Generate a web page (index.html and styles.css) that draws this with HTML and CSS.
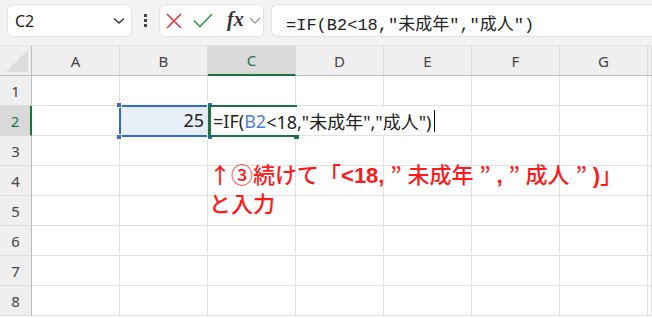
FILE: index.html
```html
<!DOCTYPE html>
<html>
<head>
    <meta charset="utf-8">
    <title>IF formula</title>
    <link rel="stylesheet" href="styles.css">
</head>
<body>
    <div class="toolbar">
        <div class="namebox">
            <span>C2</span>
            <svg width="12" height="8" viewBox="0 0 12 8"><path d="M1 1.5 L6 6 L11 1.5" fill="none" stroke="#333" stroke-width="1.4"/></svg>
        </div>
        <div class="dots"><i></i><i></i><i></i></div>
        <div class="fxbox">
            <svg class="cancel" width="16" height="16" viewBox="0 0 16 16"><path d="M1 1 L15 15 M15 1 L1 15" stroke="#e2333a" stroke-width="1.5"/></svg>
            <svg class="ok" width="20" height="15" viewBox="0 0 20 15"><path d="M1 7.5 L7 13.5 L19 1" fill="none" stroke="#2ea043" stroke-width="1.6"/></svg>
            <span class="fx">fx</span>
            <svg width="12" height="7" viewBox="0 0 12 7"><path d="M1 1 L6 6 L11 1" fill="none" stroke="#999" stroke-width="1.3"/></svg>
        </div>
        <div class="formula">=IF(B2&lt;18,"未成年","成人")</div>
    </div>

    <div class="sheet">
        <div class="corner"><span class="tri"></span></div>
        <div class="colh">A</div>
        <div class="colh">B</div>
        <div class="colh active">C</div>
        <div class="colh">D</div>
        <div class="colh">E</div>
        <div class="colh">F</div>
        <div class="colh">G</div>
        <div class="colh"></div>

        <div class="rowh">1</div>
        <div class="cell"></div><div class="cell"></div><div class="cell"></div><div class="cell"></div><div class="cell"></div><div class="cell"></div><div class="cell"></div><div class="cell"></div>
        <div class="rowh active">2</div>
        <div class="cell"></div><div class="cell num">25</div><div class="cell"></div><div class="cell"></div><div class="cell"></div><div class="cell"></div><div class="cell"></div><div class="cell"></div>
        <div class="rowh">3</div>
        <div class="cell"></div><div class="cell"></div><div class="cell"></div><div class="cell"></div><div class="cell"></div><div class="cell"></div><div class="cell"></div><div class="cell"></div>
        <div class="rowh">4</div>
        <div class="cell"></div><div class="cell"></div><div class="cell"></div><div class="cell"></div><div class="cell"></div><div class="cell"></div><div class="cell"></div><div class="cell"></div>
        <div class="rowh">5</div>
        <div class="cell"></div><div class="cell"></div><div class="cell"></div><div class="cell"></div><div class="cell"></div><div class="cell"></div><div class="cell"></div><div class="cell"></div>
        <div class="rowh">6</div>
        <div class="cell"></div><div class="cell"></div><div class="cell"></div><div class="cell"></div><div class="cell"></div><div class="cell"></div><div class="cell"></div><div class="cell"></div>
        <div class="rowh">7</div>
        <div class="cell"></div><div class="cell"></div><div class="cell"></div><div class="cell"></div><div class="cell"></div><div class="cell"></div><div class="cell"></div><div class="cell"></div>
        <div class="rowh">8</div>
        <div class="cell"></div><div class="cell"></div><div class="cell"></div><div class="cell"></div><div class="cell"></div><div class="cell"></div><div class="cell"></div><div class="cell"></div>

        <!-- selection on B2 -->
        <div class="sel">
            <i class="h tl"></i><i class="h tr"></i><i class="h bl"></i><i class="h br"></i>
        </div>
        <!-- editing C2 -->
        <div class="edit"><i class="fill"></i></div>
        <div class="edittext">=IF(<span class="ref">B2</span>&lt;18,"未成年","成人")<span class="caret"></span></div>

        <div class="note"><span class="j">↑</span>③続けて「<b>&lt;18,</b><span class="q">”</span>未成年<span class="q">”</span><b>,</b><span class="q">”</span>成人<span class="q">”</span><b>)</b>」<br>と入力</div>
    </div>
</body>
</html>
```

FILE: styles.css
```css
*
{
    box-sizing: border-box;
}

body
{
    margin: 0;
    width: 652px;
    height: 318px;
    overflow: hidden;
    background: #ffffff;
    font-family: "Noto Sans", "Noto Sans CJK JP", sans-serif;
    color: #222;
}

.toolbar
{
    height: 46px;
    background: #f3f3f3;
    display: flex;
    align-items: flex-start;
    padding: 4px 0 0 7px;
    border-bottom: 1px solid #e6e6e6;
}

.namebox
{
    width: 125px;
    height: 33px;
    background: #fff;
    border: 1px solid #e3e3e3;
    border-radius: 6px;
    display: flex;
    align-items: center;
    justify-content: space-between;
    padding: 0 6px 0 7px;
    font-size: 16px;
}

.dots
{
    width: 27px;
    height: 33px;
    display: flex;
    flex-direction: column;
    align-items: center;
    justify-content: center;
    gap: 2px;
}

.dots i
{
    width: 3px;
    height: 3px;
    background: #444;
}

.fxbox
{
    width: 105px;
    height: 33px;
    background: #fff;
    border: 1px solid #e3e3e3;
    border-radius: 6px;
    display: flex;
    align-items: center;
    padding: 0 0 0 6px;
}

.ok
{
    margin-left: 11px;
}

.fx
{
    font-family: "Liberation Serif", serif;
    font-style: italic;
    font-weight: bold;
    font-size: 20px;
    color: #333;
    margin: -3px 5px 0 14px;
}

.formula
{
    flex: 1;
    height: 33px;
    margin-left: 7px;
    background: #fff;
    border: 1px solid #e3e3e3;
    border-right: none;
    border-radius: 6px 0 0 6px;
    padding: 5px 0 0 14px;
    font-family: "Liberation Mono", "Noto Sans CJK JP", monospace;
    font-size: 17px;
    color: #222;
}

.sheet
{
    position: relative;
    display: grid;
    grid-template-columns: 32px repeat(7, 88px) 4px;
    grid-template-rows: 30px repeat(8, 30px);
}

.corner
{
    background: #efefef;
    border-right: 1px solid #bdbdbd;
    border-bottom: 1px solid #bdbdbd;
    position: relative;
}

.tri
{
    position: absolute;
    right: 3px;
    bottom: 3px;
    width: 0;
    height: 0;
    border-left: 22px solid transparent;
    border-bottom: 22px solid #dcdcdc;
}

.colh
{
    background: #efefef;
    border-right: 1px solid #dcdcdc;
    border-bottom: 1px solid #bdbdbd;
    display: flex;
    align-items: center;
    justify-content: center;
    font-size: 15px;
    color: #444;
}

.colh.active
{
    background: #d9d9d9;
    color: #1e7145;
    border-bottom: 2px solid #1e7145;
}

.rowh
{
    background: #efefef;
    border-right: 1px solid #bdbdbd;
    border-bottom: 1px solid #dcdcdc;
    display: flex;
    align-items: center;
    justify-content: center;
    font-size: 15px;
    color: #444;
}

.rowh.active
{
    background: #d9d9d9;
    color: #1e7145;
    border-right: 2px solid #1e7145;
}

.cell
{
    border-right: 1px solid #e1e1e1;
    border-bottom: 1px solid #e1e1e1;
}

.num
{
    background: #e8eef8;
    text-align: right;
    padding: 2px 3px 0 0;
    font-size: 18px;
    color: #222;
}

.sel
{
    position: absolute;
    left: 119px;
    top: 59px;
    width: 91px;
    height: 32px;
    border: 2px solid #2f6bd0;
}

.h
{
    position: absolute;
    width: 6px;
    height: 6px;
    background: #2f6bd0;
    border: 1px solid #fff;
}

.tl { left: -5px; top: -5px; }
.tr { right: -5px; top: -5px; }
.bl { left: -5px; bottom: -5px; }
.br { right: -5px; bottom: -5px; }

.edit
{
    position: absolute;
    left: 208px;
    top: 59px;
    width: 89px;
    height: 32px;
    border-top: 2px solid #1e7145;
    border-bottom: 2px solid #1e7145;
    border-left: 3px solid #1e7145;
}

.fill
{
    position: absolute;
    right: -2px;
    bottom: -4px;
    width: 5px;
    height: 5px;
    background: #1e7145;
}

.edittext
{
    position: absolute;
    left: 213px;
    top: 61px;
    height: 28px;
    display: flex;
    align-items: center;
    font-size: 18px;
    color: #222;
    background: #fff;
    white-space: nowrap;
}

.ref
{
    color: #4a7fd6;
}

.caret
{
    display: inline-block;
    width: 1px;
    height: 22px;
    background: #000;
    margin-left: 3px;
}

.note
{
    position: absolute;
    left: 209px;
    top: 113px;
    font-family: "Liberation Sans", "Noto Sans CJK JP", sans-serif;
    font-size: 22px;
    font-weight: 500;
    line-height: 29px;
    color: #ff1a1a;
    white-space: nowrap;
}

.note b
{
    font-weight: bold;
}

.j,
.q
{
    font-family: "Noto Sans CJK JP", sans-serif;
}

.q
{
    display: inline-block;
    width: 23px;
    text-align: center;
}
```
